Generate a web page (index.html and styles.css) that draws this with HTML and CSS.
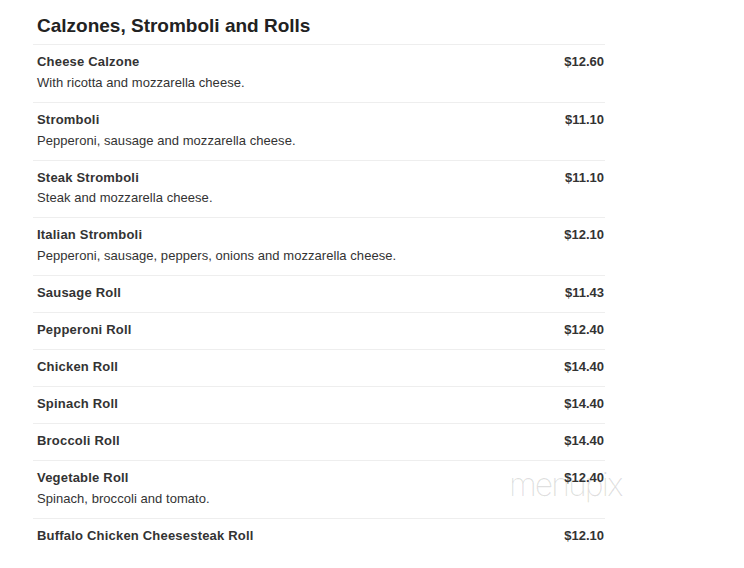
FILE: index.html
```html
<!DOCTYPE html>
<html>
<head>
<meta charset="utf-8">
<link rel="stylesheet" href="styles.css">
</head>
<body>
<div class="menu">
  <h2 class="title">Calzones, Stromboli and Rolls</h2>
  <div class="item">
    <div class="row"><span class="name">Cheese Calzone</span><span class="price">$12.60</span></div>
    <div class="desc">With ricotta and mozzarella cheese.</div>
  </div>
  <div class="item">
    <div class="row"><span class="name">Stromboli</span><span class="price">$11.10</span></div>
    <div class="desc">Pepperoni, sausage and mozzarella cheese.</div>
  </div>
  <div class="item">
    <div class="row"><span class="name">Steak Stromboli</span><span class="price">$11.10</span></div>
    <div class="desc">Steak and mozzarella cheese.</div>
  </div>
  <div class="item">
    <div class="row"><span class="name">Italian Stromboli</span><span class="price">$12.10</span></div>
    <div class="desc">Pepperoni, sausage, peppers, onions and mozzarella cheese.</div>
  </div>
  <div class="item">
    <div class="row"><span class="name">Sausage Roll</span><span class="price">$11.43</span></div>
  </div>
  <div class="item">
    <div class="row"><span class="name">Pepperoni Roll</span><span class="price">$12.40</span></div>
  </div>
  <div class="item">
    <div class="row"><span class="name">Chicken Roll</span><span class="price">$14.40</span></div>
  </div>
  <div class="item">
    <div class="row"><span class="name">Spinach Roll</span><span class="price">$14.40</span></div>
  </div>
  <div class="item">
    <div class="row"><span class="name">Broccoli Roll</span><span class="price">$14.40</span></div>
  </div>
  <div class="item wm-host">
    <span class="watermark">menupix</span>
    <div class="row"><span class="name">Vegetable Roll</span><span class="price">$12.40</span></div>
    <div class="desc">Spinach, broccoli and tomato.</div>
  </div>
  <div class="item last">
    <div class="row"><span class="name">Buffalo Chicken Cheesesteak Roll</span><span class="price">$12.10</span></div>
  </div>
</div>
</body>
</html>
```

FILE: styles.css
```css
html, body {
  margin: 0;
  padding: 0;
  background: #fff;
}
body {
  font-family: "Liberation Sans", Arial, sans-serif;
  color: #333;
}
.menu {
  width: 572px;
  margin-left: 33px;
  padding-top: 14px;
}
.title {
  margin: 0;
  padding: 0 4px 6px;
  font-size: 19px;
  line-height: 24px;
  font-weight: bold;
  color: #222;
  border-bottom: 1px solid #eee;
}
.item {
  padding: 8px 1px 10px 4px;
  border-bottom: 1px solid #eee;
}
.item.last {
  border-bottom: none;
}
.row {
  position: relative;
  z-index: 1;
  display: flex;
  justify-content: space-between;
  font-size: 13px;
  line-height: 18px;
  font-weight: bold;
  color: #333;
}
.name {
  letter-spacing: 0.2px;
}
.desc {
  position: relative;
  z-index: 1;
  margin-top: 2.75px;
  font-size: 13px;
  line-height: 18px;
  letter-spacing: 0.05px;
  color: #333;
}
.wm-host {
  position: relative;
}
.watermark {
  position: absolute;
  left: 476px;
  top: 8px;
  font-family: Inter, "Liberation Sans", sans-serif;
  font-size: 32px;
  line-height: 32px;
  font-weight: 200;
  letter-spacing: -2px;
  color: rgba(0, 0, 0, 0.13);
}
```
